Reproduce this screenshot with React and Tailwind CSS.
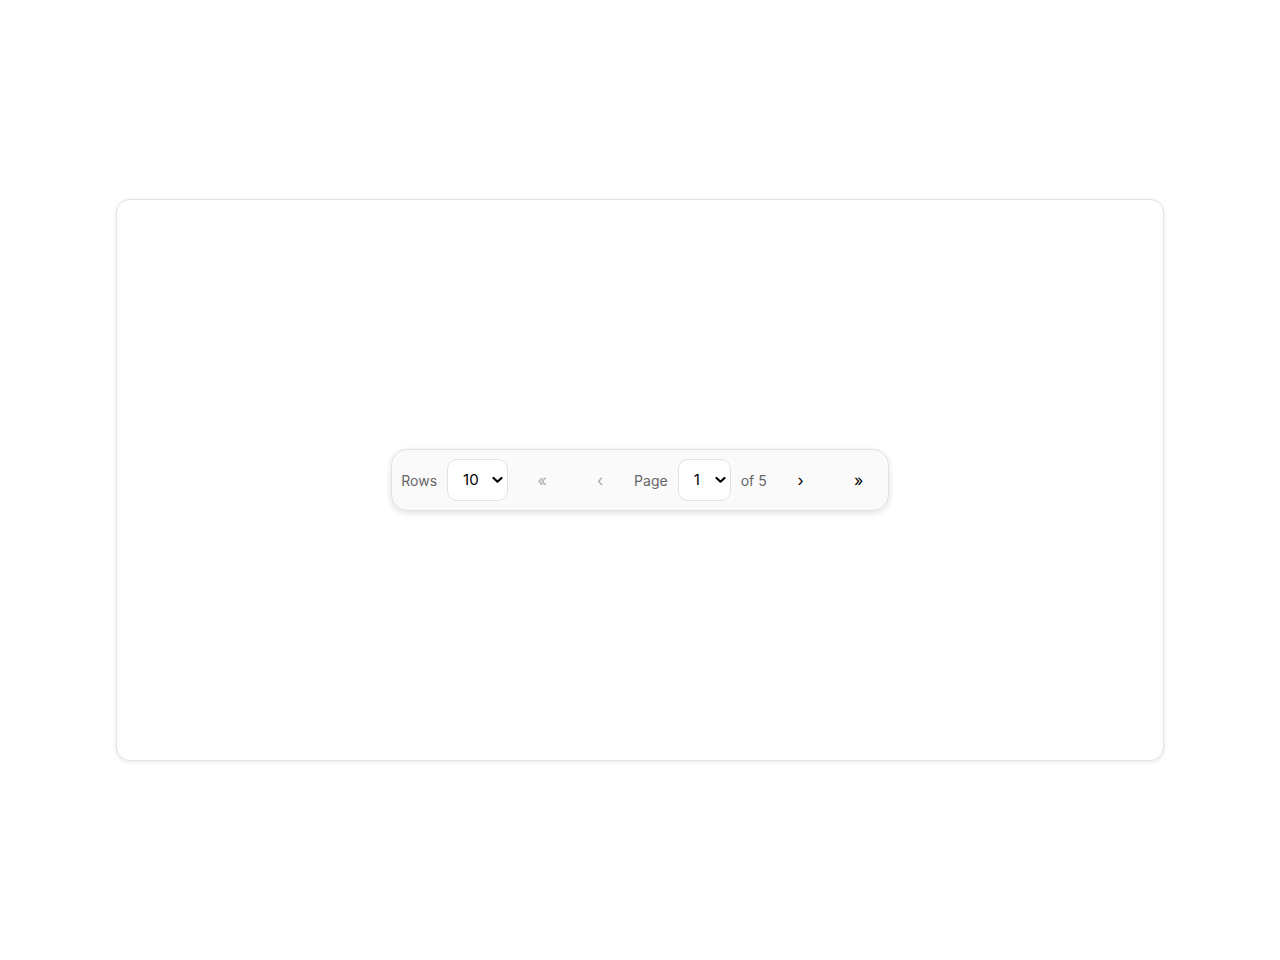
import { useState } from 'react'

function Chevron() {
  return (
    <svg width="11" height="7" viewBox="0 0 11 7" className="pointer-events-none absolute right-[5px] top-1/2 -translate-y-1/2">
      <path d="M1.5 1.5 L5.5 5.2 L9.5 1.5" fill="none" stroke="#000" strokeWidth="2.2" strokeLinecap="round" strokeLinejoin="round" />
    </svg>
  )
}

function Select({ value, onChange, options, width }) {
  return (
    <div className="relative">
      <select
        value={value}
        onChange={(e) => onChange(e.target.value)}
        className={`appearance-none h-[42px] ${width} pl-[15px] rounded-[10px] border border-[#e2e2e2] bg-white text-[15px] text-black outline-none`}
      >
        {options.map((o) => (
          <option key={o}>{o}</option>
        ))}
      </select>
      <Chevron />
    </div>
  )
}

export default function App() {
  const [rows, setRows] = useState('10')
  const [page, setPage] = useState('1')
  const total = 5
  const first = page === '1'
  const last = page === String(total)

  return (
    <div className="min-h-screen bg-white flex items-center justify-center" style={{ fontFamily: 'Inter, "Noto Sans", sans-serif' }}>
      <div className="w-[1048px] h-[562px] rounded-[14px] border border-[#e4e4e4] bg-white shadow-[0_1px_4px_rgba(0,0,0,0.1)] flex items-center justify-center">
        <div className="flex items-center gap-[10px] py-[9px] pl-[9px] pr-[5px] rounded-[16px] border border-[#e2e2e2] bg-[#fafafa] shadow-[0_2px_6px_rgba(0,0,0,0.12)]">
          <span className="text-[14px] text-[#666]">Rows</span>
          <Select value={rows} onChange={setRows} options={['10', '20', '50']} width="w-[61px]" />
          <button disabled={first} className="w-12 h-[42px] text-[16px] text-[#999] disabled:text-[#aaa]">«</button>
          <button disabled={first} className="w-12 h-[42px] text-[16px] text-[#999] disabled:text-[#aaa]">‹</button>
          <span className="text-[14px] text-[#666]">Page</span>
          <Select value={page} onChange={setPage} options={['1', '2', '3', '4', '5']} width="w-[53px]" />
          <span className="text-[14px] text-[#666]">of {total}</span>
          <button disabled={last} className="w-12 h-[42px] text-[16px] text-black">›</button>
          <button disabled={last} className="w-12 h-[42px] text-[16px] text-black">»</button>
        </div>
      </div>
    </div>
  )
}
